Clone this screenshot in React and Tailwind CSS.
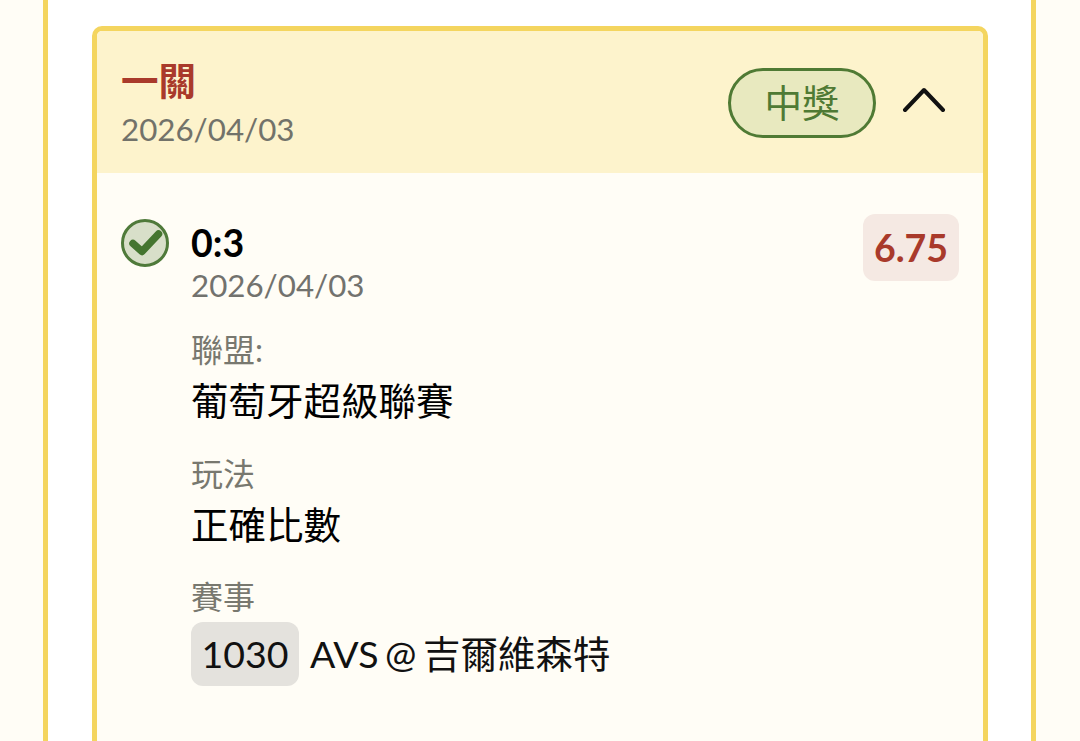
const cjk = "font-['Lato','Noto_Sans_CJK_TC',sans-serif]";

function Field({ label, children, className = "" }) {
  return (
    <div className={className}>
      <div className="text-[32px] leading-[40px] text-[#78786f]">{label}</div>
      {children}
    </div>
  );
}

export default function App() {
  return (
    <div className={`${cjk} h-[741px] w-[1080px] overflow-hidden bg-[#fffdf6] pl-[43px] pr-[44px]`}>
      <div className="h-full border-x-[5px] border-[#f4d55f] bg-white pl-[44px] pr-[43px] pt-[26px]">
        <div className="h-[900px] overflow-hidden rounded-[10px] border-[5px] border-[#f4d55f] bg-[#fffdf6]">
          <div className="flex h-[142px] items-center justify-between bg-[#fdf3cc] pl-[24px] pr-[37px]">
            <div className="mt-[3px]">
              <div className="text-[37.5px] font-bold leading-[48px] text-[#a93a2b]">一關</div>
              <div className="mt-[3px] text-[31.3px] leading-[42px] text-[#72726a]">2026/04/03</div>
            </div>
            <div className="flex items-center gap-[26px] pt-[2px]">
              <div className="flex h-[70px] w-[148px] items-center justify-center rounded-full border-[3px] border-[#4f7a34] bg-[#e8e9bf] text-[37.5px] text-[#4f7a34]">
                中獎
              </div>
              <svg className="mb-[8px]" width="44" height="26" viewBox="0 0 44 26" fill="none" stroke="#111" strokeWidth="4" strokeLinecap="round" strokeLinejoin="round">
                <path d="M3 24 L22 4 L41 24" />
              </svg>
            </div>
          </div>

          <div className="flex items-start justify-between pl-[24px] pr-[24px] pt-[41px]">
            <div className="flex gap-[22px]">
              <svg className="mt-[5px] shrink-0" width="48" height="48" viewBox="0 0 48 48" fill="none">
                <circle cx="24" cy="24" r="22.5" fill="#d8dfc9" stroke="#4f7a3a" strokeWidth="3" />
                <path d="M12 24.5 L21 32.5 L37.5 15" stroke="#44752f" strokeWidth="7.5" strokeLinecap="round" strokeLinejoin="round" />
              </svg>
              <div className="mt-[5px]">
                <div className="text-[37.5px] font-bold leading-[48px] text-black">0:3</div>
                <div className="text-[31.3px] leading-[37px] text-[#72726e]">2026/04/03</div>
                <Field label="聯盟:" className="mt-[26px]">
                  <div className="mt-[5px] text-[37.5px] leading-[52px] text-black">葡萄牙超級聯賽</div>
                </Field>
                <Field label="玩法" className="mt-[27px]">
                  <div className="mt-[5px] text-[37.5px] leading-[52px] text-black">正確比數</div>
                </Field>
                <Field label="賽事" className="mt-[26px]">
                  <div className="mt-[5px] flex items-center gap-[11px] text-[37.5px] text-[#111] [word-spacing:-3px]">
                    <span className="flex h-[64px] w-[108px] items-center justify-center rounded-[12px] bg-[#e4e2dd]">1030</span>
                    <span>AVS @ 吉爾維森特</span>
                  </div>
                </Field>
              </div>
            </div>
            <div className="flex h-[67px] w-[96px] items-center justify-center rounded-[12px] bg-[#f5e9e3] pt-[2px] text-[37.5px] font-bold text-[#a93a2b]">
              6.75
            </div>
          </div>
        </div>
      </div>
    </div>
  );
}
